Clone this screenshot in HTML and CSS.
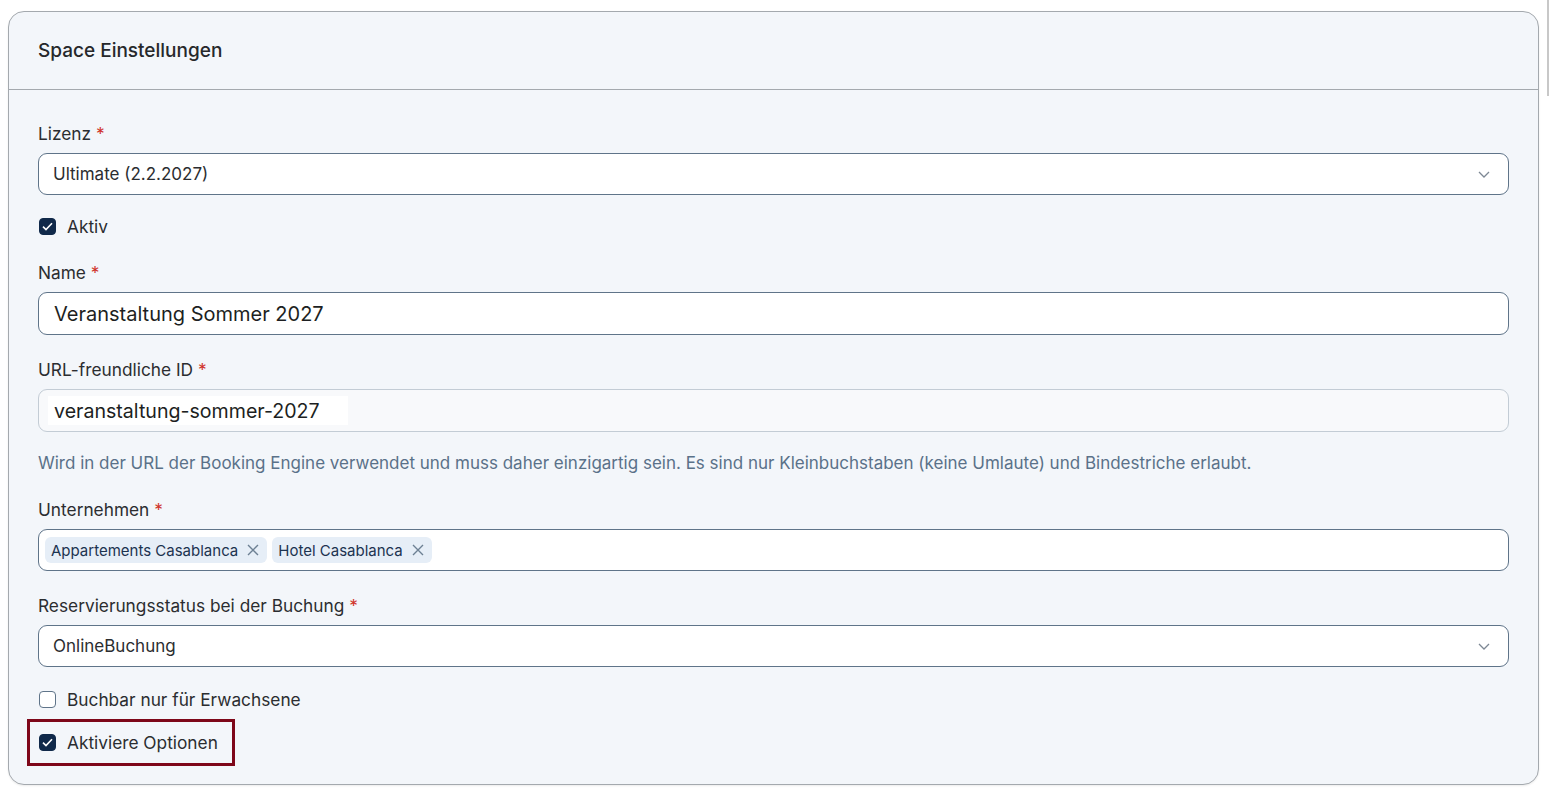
FILE: index.html
```html
<!DOCTYPE html>
<html lang="de">
<head>
    <meta charset="UTF-8">
    <title>Space Einstellungen</title>
    <link rel="stylesheet" href="styles.css">
</head>
<body>
    <div class="card">
        <div class="card-header">Space Einstellungen</div>
        <div class="card-body">
            <label class="label">Lizenz <span class="req">*</span></label>
            <div class="select">
                <span>Ultimate (2.2.2027)</span>
                <svg class="chevron" width="12" height="7" viewBox="0 0 12 7"><path d="M1 1l5 5 5-5" fill="none" stroke="#7d8894" stroke-width="1.3"/></svg>
            </div>

            <div class="check-row first">
                <span class="checkbox checked"><svg width="11" height="9" viewBox="0 0 11 9"><path d="M1 4.6l3 3L10 1.2" fill="none" stroke="#fff" stroke-width="1.6"/></svg></span>
                <span>Aktiv</span>
            </div>

            <label class="label gap-top">Name <span class="req">*</span></label>
            <div class="input big">Veranstaltung Sommer 2027</div>

            <label class="label gap-top">URL-freundliche ID <span class="req">*</span></label>
            <div class="input big muted"><span class="autofill">veranstaltung-sommer-2027</span></div>
            <p class="help">Wird in der URL der Booking Engine verwendet und muss daher einzigartig sein. Es sind nur Kleinbuchstaben (keine Umlaute) und Bindestriche erlaubt.</p>

            <label class="label gap-top">Unternehmen <span class="req">*</span></label>
            <div class="input chips">
                <span class="chip">Appartements Casablanca <svg width="12" height="12" viewBox="0 0 12 12"><path d="M1 1l10 10M11 1l-10 10" stroke="#6d8093" stroke-width="1.4"/></svg></span>
                <span class="chip">Hotel Casablanca <svg width="12" height="12" viewBox="0 0 12 12"><path d="M1 1l10 10M11 1l-10 10" stroke="#6d8093" stroke-width="1.4"/></svg></span>
            </div>

            <label class="label gap-top">Reservierungsstatus bei der Buchung <span class="req">*</span></label>
            <div class="select">
                <span>OnlineBuchung</span>
                <svg class="chevron" width="12" height="7" viewBox="0 0 12 7"><path d="M1 1l5 5 5-5" fill="none" stroke="#7d8894" stroke-width="1.3"/></svg>
            </div>

            <div class="check-row">
                <span class="checkbox"></span>
                <span>Buchbar nur für Erwachsene</span>
            </div>

            <div class="highlight">
                <div class="check-row flat">
                    <span class="checkbox checked"><svg width="11" height="9" viewBox="0 0 11 9"><path d="M1 4.6l3 3L10 1.2" fill="none" stroke="#fff" stroke-width="1.6"/></svg></span>
                    <span>Aktiviere Optionen</span>
                </div>
            </div>
        </div>
    </div>
    <div class="scroll-edge"></div>
</body>
</html>
```

FILE: styles.css
```css
body {
    margin: 0;
    background-color: #ffffff;
    font-family: 'Inter', 'Noto Sans', sans-serif;
    color: #2b2d30;
}

.card {
    margin: 11px 10px 12px 8px;
    background-color: #f3f6fa;
    border: 1px solid #a4a9ae;
    border-radius: 16px;
    box-shadow: 0 1px 2px rgba(0, 0, 0, 0.08);
}

.card-header {
    height: 77px;
    line-height: 77px;
    padding-left: 29px;
    font-size: 19px;
    font-weight: 500;
    color: #26282b;
    border-bottom: 1px solid #a4a9ae;
}

.card-body {
    padding: 32px 29px 18px 29px;
    display: flex;
    flex-direction: column;
}

.label {
    font-size: 17.3px;
    line-height: 24px;
    margin-bottom: 7px;
    color: #2b2d30;
}

.gap-top {
    margin-top: 23px;
}

.req {
    color: #d0342c;
}

.select,
.input {
    height: 42px;
    box-sizing: border-box;
    border: 1px solid #5f7489;
    border-radius: 9px;
    background-color: #ffffff;
    display: flex;
    align-items: center;
    padding: 0 14px;
    font-size: 17px;
    color: #2b2d30;
}

.select {
    justify-content: space-between;
    padding-right: 18px;
}

.input.big {
    height: 43px;
    font-size: 20px;
    padding-left: 15px;
    color: #1d1f22;
}

.input.muted {
    background-color: #f8f9fb;
    border-color: #c3ccd5;
    padding-left: 9px;
    font-size: 19.6px;
}

.autofill {
    background-color: #ffffff;
    padding: 3px 28px 2px 6px;
}

.help {
    margin: 19px 0 0 0;
    font-size: 17px;
    line-height: 24px;
    color: #5a7189;
}

.chips {
    padding-left: 6px;
    gap: 5px;
}

.chip {
    display: inline-flex;
    align-items: center;
    gap: 9px;
    height: 26px;
    padding: 0 8px 0 6px;
    background-color: #e6eef7;
    border-radius: 6px;
    font-size: 15px;
    color: #1c3350;
}

.check-row {
    display: flex;
    align-items: center;
    gap: 11px;
    height: 24px;
    margin-top: 20px;
    font-size: 17.3px;
    padding-left: 1px;
}

.check-row.first {
    margin-top: 19px;
}

.check-row.flat {
    margin-top: 0;
}

.checkbox {
    width: 17px;
    height: 17px;
    box-sizing: border-box;
    border: 1px solid #5f7489;
    border-radius: 4px;
    background-color: #ffffff;
    display: flex;
    align-items: center;
    justify-content: center;
}

.checkbox.checked {
    background-color: #10294a;
    border-color: #10294a;
}

.highlight {
    margin: 8px 0 0 -11px;
    align-self: flex-start;
    border: 3px solid #7e0719;
    padding: 8px 14px 9px 8px;
}

.scroll-edge {
    position: fixed;
    top: 0;
    right: 0;
    width: 2px;
    height: 96px;
    background-color: #c8c8c8;
}
```
